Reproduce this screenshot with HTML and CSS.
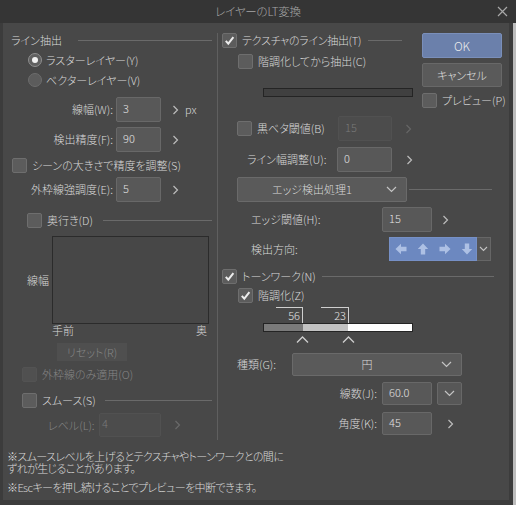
FILE: index.html
```html
<!DOCTYPE html>
<html lang="ja">
<head>
<meta charset="utf-8">
<link rel="stylesheet" href="styles.css">
</head>
<body>
<div class="window">
  <div class="titlebar">
    <span></span>
    <span class="title">レイヤーのLT変換</span>
    <span class="close"><svg width="11" height="11" viewBox="0 0 11 11"><path d="M1 1 L10 10 M10 1 L1 10" stroke="#a8a8a8" stroke-width="1.2" fill="none"/></svg></span>
  </div>
  <div class="bodyrow">
    <div class="frame">
      <div class="panel">
        <div class="columns">
          <!-- LEFT COLUMN -->
          <div class="left">
            <div class="row h14 pl8"><span>ライン抽出</span><span class="rule r-head"></span></div>
            <div class="row h14 mt6 pl25"><span class="radio on"><span class="dot"></span></span><span class="ml4">ラスターレイヤー(Y)</span></div>
            <div class="row h14 mt6 pl25"><span class="radio"></span><span class="ml4">ベクターレイヤー(V)</span></div>
            <div class="row h25 mt10"><span class="lab-r w110">線幅(W):</span><span class="inp w45 ml3">3</span><span class="chev ml11"><svg width="7" height="10" viewBox="0 0 7 10"><path d="M1.5 1 L5.5 5 L1.5 9" stroke="#bdbdbd" stroke-width="1.2" fill="none"/></svg></span><span class="ml6">px</span></div>
            <div class="row h25 mt5"><span class="lab-r w110">検出精度(F):</span><span class="inp w45 ml3">90</span><span class="chev ml11"><svg width="7" height="10" viewBox="0 0 7 10"><path d="M1.5 1 L5.5 5 L1.5 9" stroke="#bdbdbd" stroke-width="1.2" fill="none"/></svg></span></div>
            <div class="row h16 mt5 pl9"><span class="cb"></span><span class="ml5">シーンの大きさで精度を調整(S)</span></div>
            <div class="row h25 mt4"><span class="lab-r w110">外枠線強調度(E):</span><span class="inp w45 ml3">5</span><span class="chev ml11"><svg width="7" height="10" viewBox="0 0 7 10"><path d="M1.5 1 L5.5 5 L1.5 9" stroke="#bdbdbd" stroke-width="1.2" fill="none"/></svg></span></div>
            <div class="row h16 mt10 pl24"><span class="cb"></span><span class="ml5">奥行き(D)</span><span class="rule r-depth"></span></div>
            <div class="row graph mt8 pl24"><span class="ylab">線幅</span><span class="gbox"></span></div>
            <div class="axis"><span>手前</span><span>奥</span></div>
            <div class="reset">リセット(R)</div>
            <div class="row h15 mt6 pl19 dim"><span class="cb off"></span><span class="ml5">外枠線のみ適用(O)</span></div>
            <div class="row h15 mt11 pl19"><span class="cb"></span><span class="ml5">スムース(S)</span><span class="rule r-smooth"></span></div>
            <div class="row h24 mt5 dim"><span class="lab-l lvl">レベル(L):</span><span class="inp off lvl-inp">4</span><span class="chev ml13"><svg width="7" height="10" viewBox="0 0 7 10"><path d="M1.5 1 L5.5 5 L1.5 9" stroke="#6a6a6a" stroke-width="1.2" fill="none"/></svg></span></div>
          </div>

          <!-- RIGHT COLUMN -->
          <div class="right">
            <div class="rtop">
              <div class="rtop-main">
                <div class="row h15 pl4"><span class="cb"><svg width="11" height="11" viewBox="0 0 11 11"><path d="M1.8 5.8 L4.3 8.6 L9.4 2.2" stroke="#ececec" stroke-width="2" fill="none"/></svg></span><span class="ml5 tight">テクスチャのライン抽出(T)</span><span class="rule r-tex"></span></div>
                <div class="row h15 mt6 pl20"><span class="cb"></span><span class="ml5">階調化してから抽出(C)</span></div>
                <div class="texbar"></div>
              </div>
              <div class="buttons">
                <div class="btn ok">OK</div>
                <div class="btn cancel">キャンセル</div>
                <div class="row h15 mt6"><span class="cb"></span><span class="ml5">プレビュー(P)</span></div>
              </div>
            </div>
            <div class="row h25 mt8 pl19"><span class="cb"></span><span class="ml5 w81">黒ベタ閾値(B)</span><span class="inp off w54">15</span><span class="chev ml13"><svg width="7" height="10" viewBox="0 0 7 10"><path d="M1.5 1 L5.5 5 L1.5 9" stroke="#666" stroke-width="1.2" fill="none"/></svg></span></div>
            <div class="row h25 mt6 pl29"><span class="w90">ライン幅調整(U):</span><span class="inp w55">0</span><span class="chev ml14"><svg width="7" height="10" viewBox="0 0 7 10"><path d="M1.5 1 L5.5 5 L1.5 9" stroke="#bdbdbd" stroke-width="1.2" fill="none"/></svg></span></div>
            <div class="row h25 mt5 pl19"><span class="dd w170"><span class="dd-text">エッジ検出処理1</span><svg class="ddv" width="11" height="7" viewBox="0 0 11 7"><path d="M1 1 L5.5 5.5 L10 1" stroke="#c4c4c4" stroke-width="1.2" fill="none"/></svg></span><span class="rule r-edge"></span></div>
            <div class="row h25 mt5 pl33"><span class="w131">エッジ閾値(H):</span><span class="inp w50">15</span><span class="chev ml10"><svg width="7" height="10" viewBox="0 0 7 10"><path d="M1.5 1 L5.5 5 L1.5 9" stroke="#bdbdbd" stroke-width="1.2" fill="none"/></svg></span></div>
            <div class="row h24 mt5 pl33"><span class="w138">検出方向:</span>
              <span class="dirs">
                <svg width="12" height="12" viewBox="0 0 12 12"><path d="M0.5 6 L6 0.8 V3.8 H11.5 V8.2 H6 V11.2 Z" fill="#adc0e4"/></svg>
                <svg width="12" height="12" viewBox="0 0 12 12"><path d="M6 0.5 L11.2 6 H8.2 V11.5 H3.8 V6 H0.8 Z" fill="#adc0e4"/></svg>
                <svg width="12" height="12" viewBox="0 0 12 12"><path d="M11.5 6 L6 0.8 V3.8 H0.5 V8.2 H6 V11.2 Z" fill="#adc0e4"/></svg>
                <svg width="12" height="12" viewBox="0 0 12 12"><path d="M6 11.5 L11.2 6 H8.2 V0.5 H3.8 V6 H0.8 Z" fill="#adc0e4"/></svg>
              </span>
              <span class="dirv"><svg width="9" height="6" viewBox="0 0 9 6"><path d="M1 1 L4.5 4.5 L8 1" stroke="#c4c4c4" stroke-width="1.1" fill="none"/></svg></span>
            </div>
            <div class="row h15 mt8 pl4"><span class="cb"><svg width="11" height="11" viewBox="0 0 11 11"><path d="M1.8 5.8 L4.3 8.6 L9.4 2.2" stroke="#ececec" stroke-width="2" fill="none"/></svg></span><span class="ml5">トーンワーク(N)</span><span class="rule r-tone"></span></div>
            <div class="row h15 mt4 pl20"><span class="cb"><svg width="11" height="11" viewBox="0 0 11 11"><path d="M1.8 5.8 L4.3 8.6 L9.4 2.2" stroke="#ececec" stroke-width="2" fill="none"/></svg></span><span class="ml5">階調化(Z)</span></div>
            <div class="brackets"><span class="brk b1">56</span><span class="brk b2">23</span></div>
            <div class="gradbar"><span class="seg s1"></span><span class="seg s2"></span><span class="seg s3"></span></div>
            <div class="carets">
              <svg class="c1" width="13" height="7" viewBox="0 0 13 7"><path d="M1 6.5 L6.5 1 L12 6.5" stroke="#cfcfcf" stroke-width="1.3" fill="none"/></svg>
              <svg class="c2" width="13" height="7" viewBox="0 0 13 7"><path d="M1 6.5 L6.5 1 L12 6.5" stroke="#cfcfcf" stroke-width="1.3" fill="none"/></svg>
            </div>
            <div class="row h23 mt10 pl19"><span class="w55">種類(G):</span><span class="dd w170"><span class="dd-text">円</span><svg class="ddv" width="11" height="7" viewBox="0 0 11 7"><path d="M1 1 L5.5 5.5 L10 1" stroke="#c4c4c4" stroke-width="1.2" fill="none"/></svg></span></div>
            <div class="row h23 mt6 pl19"><span class="lab-r w140">線数(J):</span><span class="inp w50 ml5">60.0</span><span class="sqbtn ml5"><svg width="11" height="7" viewBox="0 0 11 7"><path d="M1 1 L5.5 5.5 L10 1" stroke="#c4c4c4" stroke-width="1.2" fill="none"/></svg></span></div>
            <div class="row h23 mt7 pl19"><span class="lab-r w140">角度(K):</span><span class="inp w50 ml5">45</span><span class="chev ml15"><svg width="7" height="10" viewBox="0 0 7 10"><path d="M1.5 1 L5.5 5 L1.5 9" stroke="#bdbdbd" stroke-width="1.2" fill="none"/></svg></span></div>
          </div>
        </div>
        <div class="notes">
          <p>※スムースレベルを上げるとテクスチャやトーンワークとの間に<br>ずれが生じることがあります。</p>
          <p class="n3">※Escキーを押し続けることでプレビューを中断できます。</p>
        </div>
      </div>
    </div>
    <div class="strip"></div>
  </div>
</div>
</body>
</html>
```

FILE: styles.css
```css
* { box-sizing: border-box; }
html, body { margin: 0; padding: 0; }
body {
  background: #3b3b3b;
  font-family: "Noto Sans CJK JP", "Noto Sans", sans-serif;
  font-size: 11px;
  font-weight: 300;
  color: #d8d8d8;
  font-feature-settings: "palt";
  line-height: 1;
}
.window { width: 516px; height: 505px; display: flex; flex-direction: column; }
.titlebar {
  height: 23px;
  background: #353535;
  display: grid;
  grid-template-columns: 1fr auto 1fr;
  align-items: center;
}
.title { color: #a6a6a6; font-size: 11.5px; letter-spacing: -0.2px; }
.close { justify-self: end; margin-right: 8px; display: flex; }
.bodyrow { display: flex; height: 482px; }
.frame { width: 513px; height: 482px; background: #3c3c3c; padding: 0 4px 5px 3px; }
.strip { width: 3px; background: #bdbdbd; }
.panel { height: 100%; background: #484848; display: flex; flex-direction: column; }
.columns { display: flex; padding-top: 10px; }
.left { width: 215px; height: 407px; border-right: 1px solid #5f5f5f; }
.right { flex: 1; }

.row { display: flex; align-items: center; white-space: nowrap; }
.h14 { height: 14px; } .h15 { height: 15px; } .h16 { height: 16px; }
.h23 { height: 23px; } .h24 { height: 24px; } .h25 { height: 25px; }
.mt4 { margin-top: 4px; } .mt5 { margin-top: 5px; } .mt6 { margin-top: 6px; }
.mt7 { margin-top: 7px; } .mt8 { margin-top: 8px; } .mt10 { margin-top: 10px; } .mt11 { margin-top: 11px; }
.pl4 { padding-left: 4px; } .pl8 { padding-left: 8px; } .pl9 { padding-left: 9px; }
.pl19 { padding-left: 19px; } .pl20 { padding-left: 20px; } .pl24 { padding-left: 24px; }
.pl25 { padding-left: 25px; } .pl29 { padding-left: 29px; } .pl33 { padding-left: 33px; }
.ml3 { margin-left: 3px; } .ml4 { margin-left: 4px; } .ml5 { margin-left: 5px; } .ml6 { margin-left: 6px; }
.ml10 { margin-left: 10px; } .ml11 { margin-left: 11px; } .ml13 { margin-left: 13px; }
.ml14 { margin-left: 14px; } .ml15 { margin-left: 15px; }
.w45 { width: 45px; } .w50 { width: 50px; } .w54 { width: 54px; } .w55 { width: 55px; }
.w81 { width: 81px; } .w90 { width: 90px; } .w110 { width: 110px; } .w131 { width: 131px; }
.w138 { width: 138px; } .w140 { width: 140px; } .w170 { width: 170px; }
.lab-r { text-align: right; flex: none; }
.dim { color: #858585; }
.tight { letter-spacing: -0.3px; }

.rule { flex: 1; height: 1px; background: #6a6a6a; }
.r-head { margin-left: 16px; margin-right: 5px; }
.r-depth { margin-left: 10px; margin-right: 5px; }
.r-smooth { margin-left: 9px; margin-right: 5px; }
.r-tex { margin-left: 7px; margin-right: 20px; }
.r-edge { margin-left: 2px; margin-right: 17px; }
.r-tone { margin-left: 6px; margin-right: 15px; }

.radio {
  width: 14px; height: 14px; border-radius: 50%;
  background: #5c5c5c; border: 1px solid #6c6c6c;
  display: flex; align-items: center; justify-content: center; flex: none;
}
.radio.on { border-color: #8e8e8e; background: #606060; }
.dot { width: 6px; height: 6px; border-radius: 50%; background: #f2f2f2; }

.cb {
  width: 15px; height: 15px; flex: none;
  background: #5c5c5c; border: 1px solid #6e6e6e; border-radius: 2px;
  display: flex; align-items: center; justify-content: center;
}
.cb.off { background: #505050; border-color: #535353; }

.inp {
  height: 100%; flex: none;
  background: #585858; border: 1px solid #686868; border-radius: 2px;
  padding: 0 0 3px 6px;
  display: flex; align-items: center;
  color: #e2e2e2;
}
.inp.off { background: #4c4c4c; border-color: #515151; color: #7a7a7a; }
.chev { display: flex; flex: none; }

.graph { height: 88px; }
.ylab { width: 25px; flex: none; }
.gbox { width: 157px; height: 88px; border: 1px solid #2b2b2b; background: #474747; }
.axis { display: flex; justify-content: space-between; margin-left: 49px; width: 155px; height: 12px; align-items: center; }
.reset {
  margin: 7px 0 0 54px; width: 70px; height: 18px;
  background: #4f4f4f; color: #868686;
  display: flex; align-items: center; justify-content: center;
}
.lvl { padding-left: 45px; width: 96px; flex: none; position: relative; z-index: 1; }
.lvl-inp { width: 62px; padding-left: 2px; }

.rtop { display: flex; }
.rtop-main { width: 204px; }
.texbar { margin: 19px 0 0 45px; width: 150px; height: 9px; border: 1px solid #242424; background: #404040; }
.buttons { width: 80px; }
.btn {
  height: 25px; border-radius: 2px;
  display: flex; align-items: center; justify-content: center;
}
.ok { background: #6b80ab; border: 1px solid #7a8fba; color: #ececec; font-size: 12px; }
.cancel { height: 24px; margin-top: 5px; background: #5a5a5a; border: 1px solid #686868; color: #e0e0e0; }

.dd {
  height: 100%; flex: none;
  background: #5a5a5a; border: 1px solid #6a6a6a; border-radius: 2px;
  display: flex; align-items: center;
  padding: 0 9px 0 0;
}
.dd-text { flex: 1; text-align: center; }
.ddv { flex: none; }

.dirs {
  width: 88px; height: 100%; flex: none;
  background: #6c88c0; border: 1px solid #7690c6;
  display: grid; grid-template-columns: repeat(4, 22px);
  align-items: center; justify-items: center;
}
.dirv {
  width: 14px; height: 100%; flex: none;
  background: #555; border: 1px solid #666; border-left: none;
  display: flex; align-items: center; justify-content: center;
}

.brackets { display: flex; margin: 4px 0 0 58px; height: 16px; }
.brk {
  border-top: 1px solid #cfcfcf; border-right: 1px solid #cfcfcf;
  height: 16px; display: flex; align-items: center; justify-content: flex-end;
  padding-right: 2px; color: #e4e4e4; font-size: 11px;
}
.b1 { width: 27px; }
.b2 { width: 28px; margin-left: 18px; }
.gradbar { display: flex; margin-left: 45px; width: 150px; height: 9px; border: 1px solid #242424; }
.seg { height: 100%; }
.s1 { width: 39px; background: #7a7a7a; }
.s2 { width: 45px; background: #c2c2c2; }
.s3 { flex: 1; background: #ffffff; }
.carets { display: flex; margin-top: 4px; height: 7px; }
.c1 { margin-left: 78px; }
.c2 { margin-left: 33px; }

.sqbtn {
  width: 25px; height: 100%; flex: none;
  background: #575757; border: 1px solid #686868; border-radius: 2px;
  display: flex; align-items: center; justify-content: center;
}

.notes { padding-left: 4px; margin-top: 10px; }
.notes p { margin: 0; line-height: 12px; white-space: nowrap; letter-spacing: -0.6px; }
.notes .n3 { margin-top: 7px; }
```
